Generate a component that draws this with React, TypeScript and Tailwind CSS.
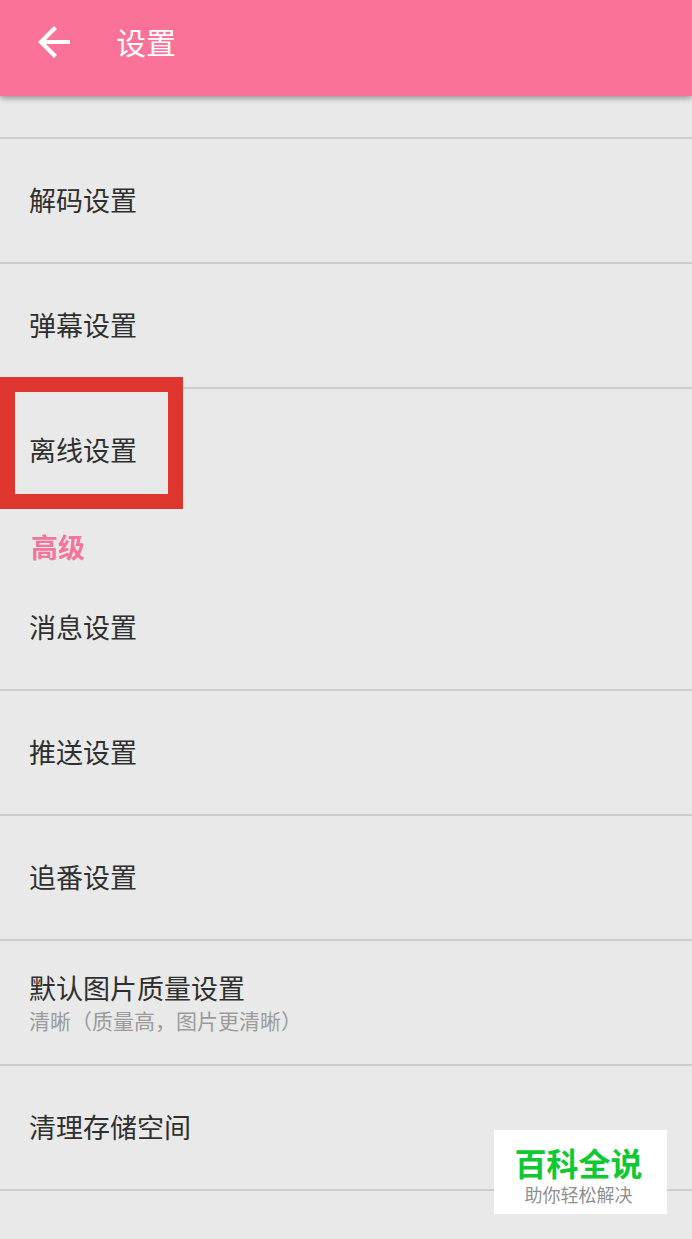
interface Setting {
  label: string;
  detail?: string;
  highlighted?: boolean;
}

const PLAYBACK_SETTINGS: Setting[] = [
  { label: '解码设置' },
  { label: '弹幕设置' },
  { label: '离线设置', highlighted: true },
];

const ADVANCED_SETTINGS: Setting[] = [
  { label: '消息设置' },
  { label: '推送设置' },
  { label: '追番设置' },
  { label: '默认图片质量设置', detail: '清晰（质量高，图片更清晰）' },
  { label: '清理存储空间' },
];

function SettingRow({ label, detail, highlighted }: Setting) {
  return (
    <li className="relative">
      <button type="button" className="flex w-full h-[123px] flex-col items-start justify-center px-[29px] pb-0.5 text-left">
        <span className="text-[27px] leading-9 text-[#2f2f2f]">{label}</span>
        {detail && <span className="text-[21px] leading-7 text-[#9b9b9b]">{detail}</span>}
      </button>
      {highlighted && (
        <div className="pointer-events-none absolute left-0 -top-3 w-[183px] h-[132px] border-[15px] border-[#df372f]" />
      )}
    </li>
  );
}

export default function App() {
  return (
    <div className="min-h-screen bg-[#e9e9e9] font-['Noto_Sans_CJK_SC',sans-serif]">
      <header className="relative flex h-24 items-center bg-[#fb7299] px-8 pb-3 text-white shadow-[0_2px_6px_rgba(0,0,0,0.4)]">
        <button type="button" aria-label="返回" className="mr-10 flex size-11 items-center justify-center">
          <svg viewBox="0 0 32 32" className="size-8" fill="none" stroke="currentColor" strokeWidth="4.2">
            <path d="M32 16H3.5M17.5 1.5L3 16L17.5 30.5" />
          </svg>
        </button>
        <h1 className="pb-0.5 text-[30px] leading-10 font-normal">设置</h1>
      </header>

      <main>
        <ul className="divide-y-2 divide-[#cdcdcd] border-t-2 border-[#cdcdcd] mt-[41px]">
          {PLAYBACK_SETTINGS.map((setting) => (
            <SettingRow key={setting.label} {...setting} />
          ))}
        </ul>

        <section>
          <h2 className="px-[31px] pt-[17px] pb-px text-[27px] leading-9 font-bold text-[#f3759b]">高级</h2>
          <ul className="divide-y-2 divide-[#cdcdcd] border-b-2 border-[#cdcdcd]">
            {ADVANCED_SETTINGS.map((setting) => (
              <SettingRow key={setting.label} {...setting} />
            ))}
          </ul>
        </section>
      </main>

      <aside className="fixed right-[25px] bottom-[25px] flex h-[84px] w-[173px] flex-col items-center justify-center bg-white pt-1 pr-1">
        <span className="text-[32px] leading-10 font-bold text-[#0fc832]">百科全说</span>
        <span className="text-[18px] leading-6 text-[#8f8f8f]">助你轻松解决</span>
      </aside>
    </div>
  );
}
